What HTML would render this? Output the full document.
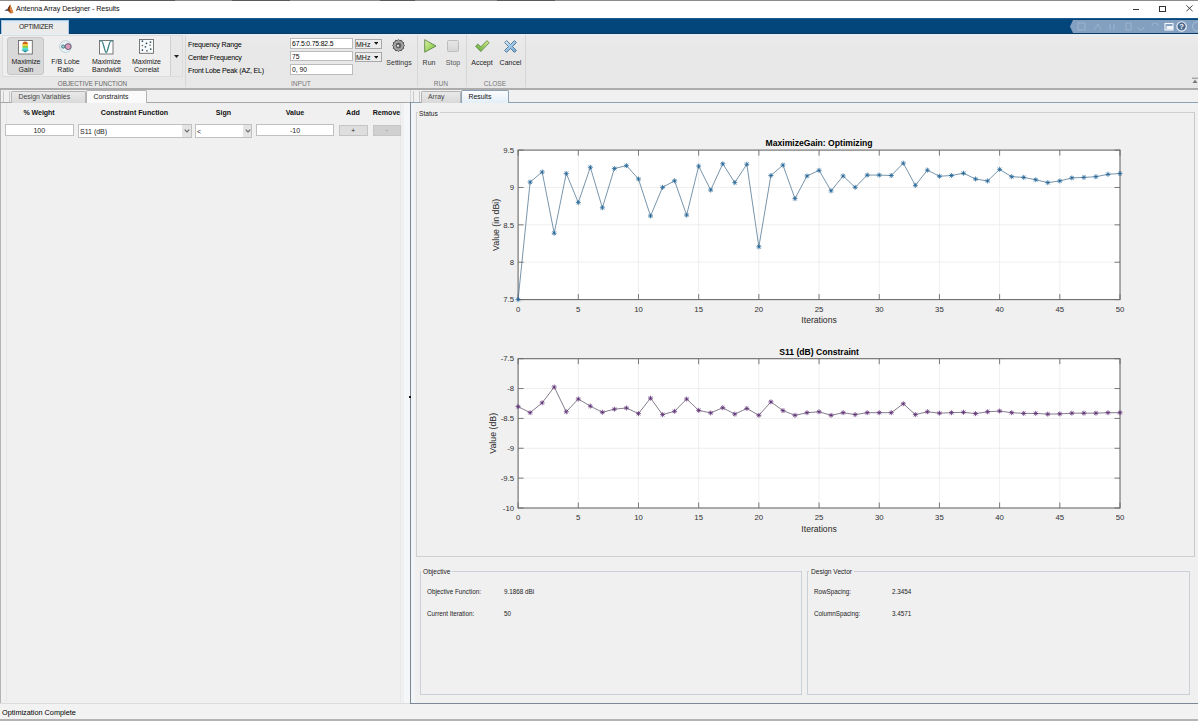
<!DOCTYPE html>
<html><head><meta charset="utf-8">
<style>
*{margin:0;padding:0;box-sizing:border-box}
html,body{width:1198px;height:721px;overflow:hidden;background:#f0f0f0;font-family:"Liberation Sans",sans-serif;color:#000}
.a{position:absolute}
.t{position:absolute;white-space:nowrap;line-height:1}
.c{text-align:center}
</style></head><body>
<!-- title bar -->
<div class="a" style="left:0;top:0;width:1198px;height:18px;background:#fff;border-top:1px solid #8c8c8c"></div>
<div class="a" style="left:40px;top:0;width:135px;height:1px;background:#5a5a5a"></div><div class="a" style="left:232px;top:0;width:58px;height:1px;background:#5a5a5a"></div><div class="a" style="left:380px;top:0;width:35px;height:1px;background:#5a5a5a"></div><div class="a" style="left:497px;top:0;width:58px;height:1px;background:#5a5a5a"></div>
<svg class="a" style="left:4px;top:3.5px" width="11" height="11" viewBox="0 0 11 11"><path d="M0.5 6.5L3.5 5L6.2 0.5L9.3 8.5L6.8 9.5L4 7Z" fill="#8a3a14"/><path d="M0.5 6.5L3.5 5L4 7Z" fill="#4a6a9a"/><path d="M6.2 0.5L9.3 8.5L6.8 9.5L5.8 5Z" fill="#e08a40"/><path d="M3.5 5L6.2 0.5L5 4Z" fill="#5a2008"/></svg>
<div class="t" style="left:16px;top:5px;font-size:7.2px;letter-spacing:-0.1px;color:#111">Antenna Array Designer - Results</div>
<div class="a" style="left:1133px;top:8.6px;width:6px;height:1px;background:#333"></div>
<div class="a" style="left:1159px;top:6px;width:6.6px;height:6px;border:1px solid #333"></div>
<svg class="a" style="left:1186.2px;top:5.4px" width="7" height="6.6" viewBox="0 0 7 6.6"><path d="M0.4 0.4L6.6 6.2M6.6 0.4L0.4 6.2" stroke="#333" stroke-width="0.9"/></svg>

<!-- blue toolstrip tab bar -->
<div class="a" style="left:0;top:18px;width:1198px;height:16px;background:#03467c;border-top:1px solid #1d5a8c;border-bottom:1px solid #0b3a66"></div>
<div class="a" style="left:1px;top:19.5px;width:68px;height:15.5px;background:linear-gradient(#dde9f4 0,#dde9f4 2px,#ebebeb 2px);border:1px solid #a9c6e2;border-bottom:none"></div>
<div class="t" style="left:19px;top:24px;font-size:6.7px;letter-spacing:-0.25px;color:#222">OPTIMIZER</div>
<!-- quick access -->
<svg class="a" style="left:1066px;top:20px" width="132" height="13" viewBox="0 0 132 13"><path d="M7 0H132V13H7L4 6.5Z" fill="#84a0c1"/>
<g fill="none" stroke="#9fb5cf" stroke-width="1" opacity="0.9"><rect x="12" y="3" width="7" height="7"/><path d="M28 10l4-6 3 6M44 4v6M48 4v6M60 3h5v7h-5zM72 7a3 3 0 1 0 6 0M86 6a3 3 0 1 1 6 0"/></g>
<rect x="99" y="3.5" width="8" height="6.5" fill="none" stroke="#f4f6f9" stroke-width="1.1"/><rect x="100.5" y="6" width="6.5" height="3.5" fill="#f4f6f9"/>
<circle cx="115.6" cy="6.4" r="4.7" fill="#4d6b90" stroke="#f4f6f9" stroke-width="1.1"/><text x="115.6" y="9.2" font-size="7.5" font-weight="bold" fill="#fff" text-anchor="middle" font-family="Liberation Sans, sans-serif">?</text>
<circle cx="131" cy="6.5" r="4.5" fill="none" stroke="#a9bdd3" stroke-width="1"/></svg>

<!-- toolstrip -->
<div class="a" style="left:0;top:34px;width:1198px;height:54px;background:linear-gradient(#e4f0f8 0,#e4f0f8 1px,#ececec 1px,#e8e8e8 12px,#e7e7e7)"></div>
<div class="a" style="left:0;top:88px;width:1198px;height:1.6px;background:#acacac"></div>
<!-- objective function group -->
<div class="a" style="left:2px;top:35px;width:181px;height:42px;border:1px solid #dcdcdc;background:#efefef"></div>
<div class="a" style="left:170px;top:36px;width:12px;height:40px;border-left:1px solid #d0d0d0;background:#e8e8e8"></div>
<svg class="a" style="left:174px;top:55px" width="5" height="3"><path d="M0 0H5L2.5 3Z" fill="#222"/></svg>
<div class="a" style="left:7px;top:37px;width:37px;height:38px;background:#d9d9d9;border:1px solid #c6c6c6;border-radius:3px"></div>
<!-- gain icon -->
<svg class="a" style="left:18px;top:39.5px" width="15" height="15" viewBox="0 0 15 15"><rect x="0.5" y="0.5" width="13.8" height="13.5" fill="#fff" stroke="#6a6a6a" stroke-width="0.9"/><defs><clipPath id="gc"><path d="M7.2 1.6C9.2 1.6 10 3 10 4.5V9.5L11.2 10L7.2 12.6L3.2 10L4.4 9.5V4.5C4.4 3 5.2 1.6 7.2 1.6Z"/></clipPath></defs>
<g clip-path="url(#gc)"><rect x="0" y="0" width="15" height="4" fill="#c8641e"/><rect x="0" y="4" width="15" height="2" fill="#f2cc3a"/><rect x="0" y="6" width="15" height="2.2" fill="#86d25a"/><rect x="0" y="8.2" width="15" height="2.2" fill="#3ed8d0"/><rect x="0" y="10.4" width="15" height="3" fill="#178a9a"/></g></svg>
<div class="t c" style="left:5px;top:57.5px;width:42px;font-size:7px;letter-spacing:-0.1px;color:#222">Maximize</div>
<div class="t c" style="left:5px;top:66px;width:42px;font-size:7px;color:#222">Gain</div>
<!-- F/B lobe icon -->
<svg class="a" style="left:58.5px;top:39.8px" width="14" height="14" viewBox="0 0 14 14"><circle cx="6.5" cy="6.6" r="5.9" fill="#f2f7fa" stroke="#b4c4cc" stroke-width="0.8"/><circle cx="6.5" cy="6.6" r="4.6" fill="none" stroke="#d4eef4" stroke-width="1"/><circle cx="4.2" cy="6.6" r="1.6" fill="#9ed4dc" stroke="#3a6e78" stroke-width="0.9"/><circle cx="9.1" cy="6.6" r="3" fill="#d89ab8" stroke="#4e4a6a" stroke-width="0.8"/></svg>
<div class="t c" style="left:44px;top:57.5px;width:43px;font-size:7px;color:#222">F/B Lobe</div>
<div class="t c" style="left:44px;top:66px;width:43px;font-size:7px;color:#222">Ratio</div>
<!-- bandwidth icon -->
<svg class="a" style="left:99px;top:39.5px" width="15" height="15" viewBox="0 0 15 15"><rect x="0.5" y="0.5" width="13.5" height="13.5" fill="#fff" stroke="#6a6a6a" stroke-width="0.9"/><path d="M0.5 0.8H2.5C4.5 0.8 5.5 12.5 7.2 12.5S10 0.8 12 0.8H14.2" fill="none" stroke="#3d8488" stroke-width="1.3"/></svg>
<div class="t c" style="left:85px;top:57.5px;width:43px;font-size:7px;letter-spacing:-0.1px;color:#222">Maximize</div>
<div class="t c" style="left:85px;top:66px;width:43px;font-size:7px;color:#222">Bandwidt</div>
<!-- correlation icon -->
<svg class="a" style="left:139px;top:39.2px" width="15" height="15" viewBox="0 0 15 15"><rect x="0.5" y="0.5" width="14" height="13.8" fill="#f6fbfd" stroke="#6a6a6a" stroke-width="0.9"/><circle cx="3.4" cy="2.2" r="0.85" fill="#3a4a5a"/><circle cx="7.5" cy="4.3" r="0.85" fill="#2a3a44"/><circle cx="11.5" cy="3.1" r="0.85" fill="#3a4a5a"/><circle cx="3.4" cy="6.5" r="0.85" fill="#7a7060"/><circle cx="6.4" cy="7.8" r="0.85" fill="#3a5a70"/><circle cx="11.0" cy="6.2" r="0.85" fill="#8a8a80"/><circle cx="3.4" cy="11.1" r="0.85" fill="#2a3a50"/><circle cx="8.0" cy="11.8" r="0.85" fill="#5a6050"/><circle cx="11.7" cy="10.1" r="0.85" fill="#2a4a3a"/></svg>
<div class="t c" style="left:125px;top:57.5px;width:43px;font-size:7px;letter-spacing:-0.1px;color:#222">Maximize</div>
<div class="t c" style="left:125px;top:66px;width:43px;font-size:7px;color:#222">Correlat</div>
<div class="t c" style="left:2px;top:81px;width:181px;font-size:6.3px;color:#666">OBJECTIVE FUNCTION</div>
<div class="a" style="left:185px;top:35px;width:1px;height:52px;background:#d6d6d6"></div>

<!-- input group -->
<div class="t" style="left:188px;top:42px;font-size:7.1px;letter-spacing:-0.2px;color:#000">Frequency Range</div>
<div class="t" style="left:188px;top:55px;font-size:7.1px;letter-spacing:-0.2px;color:#000">Center Frequency</div>
<div class="t" style="left:188px;top:68px;font-size:7.1px;letter-spacing:-0.2px;color:#000">Front Lobe Peak (AZ, EL)</div>
<div class="a" style="left:290px;top:38.3px;width:62.5px;height:10.4px;background:#fff;border:1px solid #bcbcbc"></div>
<div class="t" style="left:292px;top:40.5px;font-size:6.8px;letter-spacing:-0.15px;color:#000">67.5:0.75:82.5</div>
<div class="a" style="left:290px;top:51px;width:62.5px;height:10.4px;background:#fff;border:1px solid #bcbcbc"></div>
<div class="t" style="left:292px;top:53.5px;font-size:6.8px;color:#111">75</div>
<div class="a" style="left:290px;top:64.3px;width:62.5px;height:10.4px;background:#fff;border:1px solid #bcbcbc"></div>
<div class="t" style="left:292px;top:66.5px;font-size:6.8px;color:#111">0, 90</div>
<div class="a" style="left:354.5px;top:38.5px;width:27.5px;height:10px;background:#ececec;border:1px solid #a8a8a8"></div>
<div class="t" style="left:356px;top:40.5px;font-size:7px;color:#111">MHz</div>
<svg class="a" style="left:373.5px;top:42.2px" width="4.5" height="3"><path d="M0 0H4.5L2.25 2.8Z" fill="#111"/></svg>
<div class="a" style="left:354.5px;top:52px;width:27.5px;height:10px;background:#ececec;border:1px solid #a8a8a8"></div>
<div class="t" style="left:356px;top:54px;font-size:7px;color:#111">MHz</div>
<svg class="a" style="left:373.5px;top:55.6px" width="4.5" height="3"><path d="M0 0H4.5L2.25 2.8Z" fill="#111"/></svg>
<svg class="a" style="left:392.2px;top:39.4px" width="13" height="13" viewBox="0 0 13 13"><path d="M12.50 6.50L11.33 7.79L11.70 9.50L10.04 10.04L9.50 11.70L7.79 11.33L6.50 12.50L5.21 11.33L3.50 11.70L2.96 10.04L1.30 9.50L1.67 7.79L0.50 6.50L1.67 5.21L1.30 3.50L2.96 2.96L3.50 1.30L5.21 1.67L6.50 0.50L7.79 1.67L9.50 1.30L10.04 2.96L11.70 3.50L11.33 5.21Z" fill="#a0a0a0" stroke="#4a4a4a" stroke-width="0.9" stroke-linejoin="round"/><circle cx="6.5" cy="6.5" r="3.4" fill="#5e5e5e"/><circle cx="6.5" cy="6.5" r="3.4" fill="none" stroke="#c8c8c8" stroke-width="0.6"/><circle cx="6" cy="6.8" r="1.1" fill="#e8e8e8"/></svg>
<div class="t c" style="left:384px;top:58.5px;width:30px;font-size:7px;color:#333">Settings</div>
<div class="t" style="left:291px;top:81px;font-size:6.6px;color:#777">INPUT</div>
<div class="a" style="left:417px;top:35px;width:1px;height:52px;background:#d6d6d6"></div>

<!-- run group -->
<svg class="a" style="left:423.5px;top:39.3px" width="13" height="14" viewBox="0 0 13 14"><defs><linearGradient id="gr" x1="0" y1="0" x2="1" y2="1"><stop offset="0" stop-color="#e2f5b0"/><stop offset="0.5" stop-color="#a8d86a"/><stop offset="1" stop-color="#7cba48"/></linearGradient></defs><path d="M0.7 0.7L12 7L0.7 13.2Z" fill="url(#gr)" stroke="#4d7a38" stroke-width="0.8" stroke-linejoin="round"/></svg>
<div class="t c" style="left:417px;top:58.5px;width:24px;font-size:7px;color:#333">Run</div>
<div class="a" style="left:447px;top:40px;width:11.5px;height:11.7px;background:linear-gradient(#e6e6e6,#d6d6d6);border:1px solid #bdbdbd;border-radius:1.5px"></div>
<div class="t c" style="left:441px;top:58.5px;width:24px;font-size:7px;color:#555">Stop</div>
<div class="t c" style="left:417px;top:81px;width:48px;font-size:6.6px;color:#777">RUN</div>
<div class="a" style="left:465.5px;top:35px;width:1px;height:52px;background:#d6d6d6"></div>

<!-- close group -->
<svg class="a" style="left:474.5px;top:40px" width="15" height="12.5" viewBox="0 0 15 12.5"><defs><linearGradient id="gk" x1="1" y1="0" x2="0" y2="1"><stop offset="0" stop-color="#d8ec90"/><stop offset="0.6" stop-color="#8cc45a"/><stop offset="1" stop-color="#5f9c3a"/></linearGradient></defs><path d="M0.6 6.2L2.8 4L5.8 6.8L12 0.6L14.2 2.8L5.8 11.6Z" fill="url(#gk)" stroke="#4f7a30" stroke-width="0.7" stroke-linejoin="round"/></svg>
<div class="t c" style="left:467px;top:58.5px;width:30px;font-size:7px;color:#222">Accept</div>
<svg class="a" style="left:503.8px;top:40px" width="13" height="13" viewBox="0 0 13 13"><defs><linearGradient id="gx" x1="0" y1="0" x2="1" y2="1"><stop offset="0" stop-color="#e4f0fa"/><stop offset="0.5" stop-color="#9cc6e8"/><stop offset="1" stop-color="#6fa4d2"/></linearGradient></defs><path d="M0.6 2.6L2.6 0.6L6.5 4.5L10.4 0.6L12.4 2.6L8.5 6.5L12.4 10.4L10.4 12.4L6.5 8.5L2.6 12.4L0.6 10.4L4.5 6.5Z" fill="url(#gx)" stroke="#3f6688" stroke-width="0.8" stroke-linejoin="round"/></svg>
<div class="t c" style="left:496px;top:58.5px;width:29px;font-size:7px;color:#222">Cancel</div>
<div class="t c" style="left:466px;top:81px;width:58px;font-size:6.6px;color:#777">CLOSE</div>
<div class="a" style="left:524.5px;top:35px;width:1px;height:52px;background:#d6d6d6"></div>
<svg class="a" style="left:1192px;top:77px" width="6" height="7"><path d="M0 1.2H6" stroke="#888" stroke-width="1"/><path d="M0.5 6L3 2.8L5.5 6Z" fill="#777"/></svg>

<!-- left panel -->
<div class="a" style="left:0;top:89.5px;width:410px;height:613.5px;border-left:1px solid #b4b4b4;background:#f0f0f0"></div>
<div class="a" style="left:0;top:102px;width:410px;height:1px;background:#a8a8a8"></div>
<div class="a" style="left:3px;top:91px;width:7px;height:11px;border-left:1px solid #c8c8c8;border-right:1px solid #c8c8c8"></div>
<div class="a" style="left:10.5px;top:90.5px;width:75px;height:12px;background:linear-gradient(#e9e9e9,#d9d9d9);border:1px solid #b4b4b4;border-bottom:none;border-radius:2px 2px 0 0"></div>
<div class="t" style="left:18.5px;top:94px;font-size:6.9px;color:#444">Design Variables</div>
<div class="a" style="left:86px;top:90px;width:61px;height:13px;background:#fafafa;border:1px solid #b4b4b4;border-bottom:none;border-radius:2px 2px 0 0"></div>
<div class="t" style="left:93.5px;top:94px;font-size:6.9px;color:#222">Constraints</div>
<div class="a" style="left:5.5px;top:103px;width:1px;height:599px;background:#e6e6e6"></div>
<div class="a" style="left:400px;top:103px;width:1px;height:599px;background:#e8e8e8"></div>

<div class="t c" style="left:5px;top:110px;width:68px;font-size:7.1px;font-weight:bold;letter-spacing:-0.1px;color:#111">% Weight</div>
<div class="t c" style="left:78px;top:110px;width:113px;font-size:7.1px;font-weight:bold;color:#111">Constraint Function</div>
<div class="t c" style="left:195px;top:110px;width:57px;font-size:7.1px;font-weight:bold;color:#111">Sign</div>
<div class="t c" style="left:256px;top:110px;width:78px;font-size:7.1px;font-weight:bold;color:#111">Value</div>
<div class="t c" style="left:339px;top:110px;width:28px;font-size:7.1px;font-weight:bold;color:#111">Add</div>
<div class="t c" style="left:372px;top:110px;width:29px;font-size:7.1px;font-weight:bold;color:#111">Remove</div>

<div class="a" style="left:5px;top:124.2px;width:68.5px;height:11.8px;background:#fff;border:1px solid #c0c0c0"></div>
<div class="t c" style="left:5px;top:127px;width:68.5px;font-size:7px;color:#222">100</div>
<div class="a" style="left:78px;top:124px;width:113.5px;height:13.8px;background:#fff;border:1px solid #c0c0c0"></div>
<div class="a" style="left:182px;top:125px;width:9px;height:11.8px;background:#e4e4e4"></div>
<svg class="a" style="left:184px;top:129.3px" width="6" height="4"><path d="M0.7 0.7L3 3L5.3 0.7" fill="none" stroke="#666" stroke-width="1.1"/></svg>
<div class="t" style="left:80px;top:128px;font-size:7px;color:#222">S11 (dB)</div>
<div class="a" style="left:195px;top:124px;width:57px;height:13.8px;background:#fff;border:1px solid #c0c0c0"></div>
<div class="a" style="left:243px;top:125px;width:8px;height:11.8px;background:#e4e4e4"></div>
<svg class="a" style="left:245px;top:129.3px" width="6" height="4"><path d="M0.7 0.7L3 3L5.3 0.7" fill="none" stroke="#666" stroke-width="1.1"/></svg>
<div class="t" style="left:197px;top:128px;font-size:7px;color:#222">&lt;</div>
<div class="a" style="left:256px;top:124.2px;width:78px;height:11.8px;background:#fff;border:1px solid #c0c0c0"></div>
<div class="t c" style="left:256px;top:127px;width:78px;font-size:7px;color:#222">-10</div>
<div class="a" style="left:339px;top:125px;width:28.5px;height:10.5px;background:#dedede;border:1px solid #c4c4c4"></div>
<div class="t c" style="left:339px;top:127.5px;width:28.5px;font-size:6.5px;color:#222">+</div>
<div class="a" style="left:372.5px;top:125px;width:28.5px;height:10.5px;background:#d0d0d0;border:1px solid #c6c6c6"></div>
<div class="t c" style="left:372.5px;top:126px;width:28.5px;font-size:7px;color:#888">-</div>

<!-- right panel -->
<div class="a" style="left:404px;top:103px;width:6px;height:600px;background:#f4f6f8"></div>
<div class="a" style="left:410px;top:89.5px;width:788px;height:13px;background:#f0f0f0;border-left:1px solid #d4d8dc"></div>
<div class="a" style="left:410px;top:102px;width:788px;height:601.5px;background:#f0f0f0;border-left:1px solid #7d8896;border-bottom:1px solid #7d8896"></div>
<div class="a" style="left:411px;top:102px;width:787px;height:1px;background:#8da0b4"></div>
<div class="a" style="left:411px;top:103px;width:787px;height:4px;background:#f0f2f2"></div>
<div class="a" style="left:411px;top:103px;width:4px;height:600px;background:#f1f5f8"></div>
<div class="a" style="left:413px;top:91px;width:7px;height:11px;border-left:1px solid #c8c8c8;border-right:1px solid #c8c8c8"></div>
<div class="a" style="left:421px;top:90.5px;width:40px;height:12px;background:linear-gradient(#e9e9e9,#d9d9d9);border:1px solid #b4b4b4;border-bottom:none;border-radius:2px 2px 0 0"></div>
<div class="t" style="left:428px;top:94px;font-size:6.9px;color:#444">Array</div>
<div class="a" style="left:461px;top:89.5px;width:48px;height:13.5px;background:linear-gradient(#fbfdff,#e3eef8);border:1px solid #8da0b4;border-bottom:none;border-radius:2px 2px 0 0"></div>
<div class="t" style="left:468.5px;top:94px;font-size:6.9px;color:#111">Results</div>
<div class="a" style="left:409px;top:396px;width:2px;height:2px;background:#111"></div>

<!-- status panel -->
<div class="a" style="left:415.5px;top:112px;width:779px;height:444.5px;border:1px solid #d0d0d0;border-right-color:#c8c8c8"></div>
<div class="a" style="left:418px;top:109px;width:22px;height:7px;background:#f0f0f0"></div>
<div class="t" style="left:419px;top:110.5px;font-size:6.6px;color:#222">Status</div>

<svg class="a" style="left:0;top:0" width="1198" height="721" viewBox="0 0 1198 721">
<rect x="518.10" y="150.10" width="601.90" height="149.50" fill="#fff"/>
<path d="M578.29 150.10V299.60M638.48 150.10V299.60M698.67 150.10V299.60M758.86 150.10V299.60M819.05 150.10V299.60M879.24 150.10V299.60M939.43 150.10V299.60M999.62 150.10V299.60M1059.81 150.10V299.60M518.10 262.23H1120.00M518.10 224.85H1120.00M518.10 187.47H1120.00" stroke="#ebebeb" stroke-width="0.8" fill="none"/>
<path d="M518.10 299.60V294.10M518.10 150.10V155.60M578.29 299.60V294.10M578.29 150.10V155.60M638.48 299.60V294.10M638.48 150.10V155.60M698.67 299.60V294.10M698.67 150.10V155.60M758.86 299.60V294.10M758.86 150.10V155.60M819.05 299.60V294.10M819.05 150.10V155.60M879.24 299.60V294.10M879.24 150.10V155.60M939.43 299.60V294.10M939.43 150.10V155.60M999.62 299.60V294.10M999.62 150.10V155.60M1059.81 299.60V294.10M1059.81 150.10V155.60M1120.00 299.60V294.10M1120.00 150.10V155.60M518.10 299.60H523.60M1120.00 299.60H1114.50M518.10 262.23H523.60M1120.00 262.23H1114.50M518.10 224.85H523.60M1120.00 224.85H1114.50M518.10 187.47H523.60M1120.00 187.47H1114.50M518.10 150.10H523.60M1120.00 150.10H1114.50" stroke="#5a5a5a" stroke-width="0.8" fill="none"/>
<rect x="518.10" y="150.10" width="601.90" height="149.50" fill="none" stroke="#6a6a6a" stroke-width="1.1"/>
<polyline points="518.10,299.60 530.14,182.09 542.18,172.00 554.21,233.22 566.25,173.42 578.29,202.57 590.33,167.29 602.37,207.81 614.40,168.49 626.44,165.65 638.48,179.03 650.52,216.03 662.56,187.33 674.59,180.75 686.63,215.13 698.67,166.10 710.71,190.09 722.75,163.78 734.78,182.62 746.82,164.23 758.86,246.83 770.90,175.51 782.94,165.05 794.97,198.61 807.01,175.96 819.05,170.36 831.09,190.84 843.13,175.96 855.16,187.33 867.20,175.07 879.24,175.07 891.28,175.51 903.32,163.18 915.35,185.38 927.39,170.13 939.43,176.26 951.47,175.51 963.51,173.20 975.54,179.03 987.58,180.97 999.62,169.39 1011.66,176.71 1023.70,177.38 1035.73,179.78 1047.77,182.62 1059.81,180.97 1071.85,177.91 1083.89,177.38 1095.92,176.71 1107.96,174.32 1120.00,173.51" fill="none" stroke="#4a7190" stroke-width="0.75"/>
<path d="M515.60 299.60h5.00M518.10 297.10v5.00M516.30 297.80l3.60 3.60M516.30 301.40l3.60 -3.60M527.64 182.09h5.00M530.14 179.59v5.00M528.34 180.29l3.60 3.60M528.34 183.89l3.60 -3.60M539.68 172.00h5.00M542.18 169.50v5.00M540.38 170.20l3.60 3.60M540.38 173.80l3.60 -3.60M551.71 233.22h5.00M554.21 230.72v5.00M552.41 231.42l3.60 3.60M552.41 235.02l3.60 -3.60M563.75 173.42h5.00M566.25 170.92v5.00M564.45 171.62l3.60 3.60M564.45 175.22l3.60 -3.60M575.79 202.57h5.00M578.29 200.07v5.00M576.49 200.77l3.60 3.60M576.49 204.37l3.60 -3.60M587.83 167.29h5.00M590.33 164.79v5.00M588.53 165.49l3.60 3.60M588.53 169.09l3.60 -3.60M599.87 207.81h5.00M602.37 205.31v5.00M600.57 206.01l3.60 3.60M600.57 209.61l3.60 -3.60M611.90 168.49h5.00M614.40 165.99v5.00M612.60 166.69l3.60 3.60M612.60 170.29l3.60 -3.60M623.94 165.65h5.00M626.44 163.15v5.00M624.64 163.85l3.60 3.60M624.64 167.45l3.60 -3.60M635.98 179.03h5.00M638.48 176.53v5.00M636.68 177.23l3.60 3.60M636.68 180.83l3.60 -3.60M648.02 216.03h5.00M650.52 213.53v5.00M648.72 214.23l3.60 3.60M648.72 217.83l3.60 -3.60M660.06 187.33h5.00M662.56 184.83v5.00M660.76 185.53l3.60 3.60M660.76 189.13l3.60 -3.60M672.09 180.75h5.00M674.59 178.25v5.00M672.79 178.95l3.60 3.60M672.79 182.55l3.60 -3.60M684.13 215.13h5.00M686.63 212.63v5.00M684.83 213.33l3.60 3.60M684.83 216.93l3.60 -3.60M696.17 166.10h5.00M698.67 163.60v5.00M696.87 164.30l3.60 3.60M696.87 167.90l3.60 -3.60M708.21 190.09h5.00M710.71 187.59v5.00M708.91 188.29l3.60 3.60M708.91 191.89l3.60 -3.60M720.25 163.78h5.00M722.75 161.28v5.00M720.95 161.98l3.60 3.60M720.95 165.58l3.60 -3.60M732.28 182.62h5.00M734.78 180.12v5.00M732.98 180.82l3.60 3.60M732.98 184.42l3.60 -3.60M744.32 164.23h5.00M746.82 161.73v5.00M745.02 162.43l3.60 3.60M745.02 166.03l3.60 -3.60M756.36 246.83h5.00M758.86 244.33v5.00M757.06 245.03l3.60 3.60M757.06 248.63l3.60 -3.60M768.40 175.51h5.00M770.90 173.01v5.00M769.10 173.71l3.60 3.60M769.10 177.31l3.60 -3.60M780.44 165.05h5.00M782.94 162.55v5.00M781.14 163.25l3.60 3.60M781.14 166.85l3.60 -3.60M792.47 198.61h5.00M794.97 196.11v5.00M793.17 196.81l3.60 3.60M793.17 200.41l3.60 -3.60M804.51 175.96h5.00M807.01 173.46v5.00M805.21 174.16l3.60 3.60M805.21 177.76l3.60 -3.60M816.55 170.36h5.00M819.05 167.86v5.00M817.25 168.56l3.60 3.60M817.25 172.16l3.60 -3.60M828.59 190.84h5.00M831.09 188.34v5.00M829.29 189.04l3.60 3.60M829.29 192.64l3.60 -3.60M840.63 175.96h5.00M843.13 173.46v5.00M841.33 174.16l3.60 3.60M841.33 177.76l3.60 -3.60M852.66 187.33h5.00M855.16 184.83v5.00M853.36 185.53l3.60 3.60M853.36 189.13l3.60 -3.60M864.70 175.07h5.00M867.20 172.57v5.00M865.40 173.27l3.60 3.60M865.40 176.87l3.60 -3.60M876.74 175.07h5.00M879.24 172.57v5.00M877.44 173.27l3.60 3.60M877.44 176.87l3.60 -3.60M888.78 175.51h5.00M891.28 173.01v5.00M889.48 173.71l3.60 3.60M889.48 177.31l3.60 -3.60M900.82 163.18h5.00M903.32 160.68v5.00M901.52 161.38l3.60 3.60M901.52 164.98l3.60 -3.60M912.85 185.38h5.00M915.35 182.88v5.00M913.55 183.58l3.60 3.60M913.55 187.18l3.60 -3.60M924.89 170.13h5.00M927.39 167.63v5.00M925.59 168.33l3.60 3.60M925.59 171.93l3.60 -3.60M936.93 176.26h5.00M939.43 173.76v5.00M937.63 174.46l3.60 3.60M937.63 178.06l3.60 -3.60M948.97 175.51h5.00M951.47 173.01v5.00M949.67 173.71l3.60 3.60M949.67 177.31l3.60 -3.60M961.01 173.20h5.00M963.51 170.70v5.00M961.71 171.40l3.60 3.60M961.71 175.00l3.60 -3.60M973.04 179.03h5.00M975.54 176.53v5.00M973.74 177.23l3.60 3.60M973.74 180.83l3.60 -3.60M985.08 180.97h5.00M987.58 178.47v5.00M985.78 179.17l3.60 3.60M985.78 182.77l3.60 -3.60M997.12 169.39h5.00M999.62 166.89v5.00M997.82 167.59l3.60 3.60M997.82 171.19l3.60 -3.60M1009.16 176.71h5.00M1011.66 174.21v5.00M1009.86 174.91l3.60 3.60M1009.86 178.51l3.60 -3.60M1021.20 177.38h5.00M1023.70 174.88v5.00M1021.90 175.58l3.60 3.60M1021.90 179.18l3.60 -3.60M1033.23 179.78h5.00M1035.73 177.28v5.00M1033.93 177.98l3.60 3.60M1033.93 181.58l3.60 -3.60M1045.27 182.62h5.00M1047.77 180.12v5.00M1045.97 180.82l3.60 3.60M1045.97 184.42l3.60 -3.60M1057.31 180.97h5.00M1059.81 178.47v5.00M1058.01 179.17l3.60 3.60M1058.01 182.77l3.60 -3.60M1069.35 177.91h5.00M1071.85 175.41v5.00M1070.05 176.11l3.60 3.60M1070.05 179.71l3.60 -3.60M1081.39 177.38h5.00M1083.89 174.88v5.00M1082.09 175.58l3.60 3.60M1082.09 179.18l3.60 -3.60M1093.42 176.71h5.00M1095.92 174.21v5.00M1094.12 174.91l3.60 3.60M1094.12 178.51l3.60 -3.60M1105.46 174.32h5.00M1107.96 171.82v5.00M1106.16 172.52l3.60 3.60M1106.16 176.12l3.60 -3.60M1117.50 173.51h5.00M1120.00 171.01v5.00M1118.20 171.71l3.60 3.60M1118.20 175.31l3.60 -3.60" stroke="#1f6294" stroke-width="0.75" fill="none"/>
<g font-family='"Liberation Sans", sans-serif' font-size="7.8" fill="#303030"><text x="518.10" y="311.60" text-anchor="middle">0</text><text x="578.29" y="311.60" text-anchor="middle">5</text><text x="638.48" y="311.60" text-anchor="middle">10</text><text x="698.67" y="311.60" text-anchor="middle">15</text><text x="758.86" y="311.60" text-anchor="middle">20</text><text x="819.05" y="311.60" text-anchor="middle">25</text><text x="879.24" y="311.60" text-anchor="middle">30</text><text x="939.43" y="311.60" text-anchor="middle">35</text><text x="999.62" y="311.60" text-anchor="middle">40</text><text x="1059.81" y="311.60" text-anchor="middle">45</text><text x="1120.00" y="311.60" text-anchor="middle">50</text><text x="514.10" y="302.30" text-anchor="end">7.5</text><text x="514.10" y="264.93" text-anchor="end">8</text><text x="514.10" y="227.55" text-anchor="end">8.5</text><text x="514.10" y="190.17" text-anchor="end">9</text><text x="514.10" y="152.80" text-anchor="end">9.5</text></g>
<text x="819.05" y="323.20" text-anchor="middle" font-family='"Liberation Sans", sans-serif' font-size="8.6" fill="#262626">Iterations</text>
<text x="819.05" y="146.20" text-anchor="middle" font-family='"Liberation Sans", sans-serif' font-size="8.6" font-weight="bold" fill="#000">MaximizeGain: Optimizing</text>
<text transform="translate(499.30 224.85) rotate(-90)" text-anchor="middle" font-family='"Liberation Sans", sans-serif' font-size="8.8" fill="#262626">Value (in dBi)</text>
<rect x="518.10" y="358.70" width="601.90" height="149.30" fill="#fff"/>
<path d="M578.29 358.70V508.00M638.48 358.70V508.00M698.67 358.70V508.00M758.86 358.70V508.00M819.05 358.70V508.00M879.24 358.70V508.00M939.43 358.70V508.00M999.62 358.70V508.00M1059.81 358.70V508.00M518.10 478.14H1120.00M518.10 448.28H1120.00M518.10 418.42H1120.00M518.10 388.56H1120.00" stroke="#ebebeb" stroke-width="0.8" fill="none"/>
<path d="M518.10 508.00V502.50M518.10 358.70V364.20M578.29 508.00V502.50M578.29 358.70V364.20M638.48 508.00V502.50M638.48 358.70V364.20M698.67 508.00V502.50M698.67 358.70V364.20M758.86 508.00V502.50M758.86 358.70V364.20M819.05 508.00V502.50M819.05 358.70V364.20M879.24 508.00V502.50M879.24 358.70V364.20M939.43 508.00V502.50M939.43 358.70V364.20M999.62 508.00V502.50M999.62 358.70V364.20M1059.81 508.00V502.50M1059.81 358.70V364.20M1120.00 508.00V502.50M1120.00 358.70V364.20M518.10 508.00H523.60M1120.00 508.00H1114.50M518.10 478.14H523.60M1120.00 478.14H1114.50M518.10 448.28H523.60M1120.00 448.28H1114.50M518.10 418.42H523.60M1120.00 418.42H1114.50M518.10 388.56H523.60M1120.00 388.56H1114.50M518.10 358.70H523.60M1120.00 358.70H1114.50" stroke="#5a5a5a" stroke-width="0.8" fill="none"/>
<rect x="518.10" y="358.70" width="601.90" height="149.30" fill="none" stroke="#6a6a6a" stroke-width="1.1"/>
<polyline points="518.10,406.60 530.14,412.69 542.18,402.83 554.21,387.01 566.25,411.79 578.29,399.01 590.33,406.12 602.37,412.27 614.40,409.16 626.44,407.97 638.48,413.64 650.52,398.12 662.56,414.60 674.59,411.31 686.63,399.01 698.67,410.36 710.71,412.93 722.75,407.73 734.78,414.12 746.82,408.45 758.86,415.31 770.90,401.88 782.94,410.60 794.97,415.31 807.01,412.69 819.05,411.79 831.09,415.31 843.13,412.69 855.16,414.60 867.20,412.69 879.24,412.69 891.28,412.69 903.32,403.73 915.35,414.60 927.39,411.79 939.43,413.16 951.47,412.69 963.51,412.27 975.54,413.64 987.58,411.79 999.62,411.07 1011.66,412.69 1023.70,413.40 1035.73,413.40 1047.77,414.12 1059.81,413.88 1071.85,413.16 1083.89,413.16 1095.92,413.16 1107.96,412.69 1120.00,412.69" fill="none" stroke="#5e5068" stroke-width="0.75"/>
<path d="M515.60 406.60h5.00M518.10 404.10v5.00M516.30 404.80l3.60 3.60M516.30 408.40l3.60 -3.60M527.64 412.69h5.00M530.14 410.19v5.00M528.34 410.89l3.60 3.60M528.34 414.49l3.60 -3.60M539.68 402.83h5.00M542.18 400.33v5.00M540.38 401.03l3.60 3.60M540.38 404.63l3.60 -3.60M551.71 387.01h5.00M554.21 384.51v5.00M552.41 385.21l3.60 3.60M552.41 388.81l3.60 -3.60M563.75 411.79h5.00M566.25 409.29v5.00M564.45 409.99l3.60 3.60M564.45 413.59l3.60 -3.60M575.79 399.01h5.00M578.29 396.51v5.00M576.49 397.21l3.60 3.60M576.49 400.81l3.60 -3.60M587.83 406.12h5.00M590.33 403.62v5.00M588.53 404.32l3.60 3.60M588.53 407.92l3.60 -3.60M599.87 412.27h5.00M602.37 409.77v5.00M600.57 410.47l3.60 3.60M600.57 414.07l3.60 -3.60M611.90 409.16h5.00M614.40 406.66v5.00M612.60 407.36l3.60 3.60M612.60 410.96l3.60 -3.60M623.94 407.97h5.00M626.44 405.47v5.00M624.64 406.17l3.60 3.60M624.64 409.77l3.60 -3.60M635.98 413.64h5.00M638.48 411.14v5.00M636.68 411.84l3.60 3.60M636.68 415.44l3.60 -3.60M648.02 398.12h5.00M650.52 395.62v5.00M648.72 396.32l3.60 3.60M648.72 399.92l3.60 -3.60M660.06 414.60h5.00M662.56 412.10v5.00M660.76 412.80l3.60 3.60M660.76 416.40l3.60 -3.60M672.09 411.31h5.00M674.59 408.81v5.00M672.79 409.51l3.60 3.60M672.79 413.11l3.60 -3.60M684.13 399.01h5.00M686.63 396.51v5.00M684.83 397.21l3.60 3.60M684.83 400.81l3.60 -3.60M696.17 410.36h5.00M698.67 407.86v5.00M696.87 408.56l3.60 3.60M696.87 412.16l3.60 -3.60M708.21 412.93h5.00M710.71 410.43v5.00M708.91 411.13l3.60 3.60M708.91 414.73l3.60 -3.60M720.25 407.73h5.00M722.75 405.23v5.00M720.95 405.93l3.60 3.60M720.95 409.53l3.60 -3.60M732.28 414.12h5.00M734.78 411.62v5.00M732.98 412.32l3.60 3.60M732.98 415.92l3.60 -3.60M744.32 408.45h5.00M746.82 405.95v5.00M745.02 406.65l3.60 3.60M745.02 410.25l3.60 -3.60M756.36 415.31h5.00M758.86 412.81v5.00M757.06 413.51l3.60 3.60M757.06 417.11l3.60 -3.60M768.40 401.88h5.00M770.90 399.38v5.00M769.10 400.08l3.60 3.60M769.10 403.68l3.60 -3.60M780.44 410.60h5.00M782.94 408.10v5.00M781.14 408.80l3.60 3.60M781.14 412.40l3.60 -3.60M792.47 415.31h5.00M794.97 412.81v5.00M793.17 413.51l3.60 3.60M793.17 417.11l3.60 -3.60M804.51 412.69h5.00M807.01 410.19v5.00M805.21 410.89l3.60 3.60M805.21 414.49l3.60 -3.60M816.55 411.79h5.00M819.05 409.29v5.00M817.25 409.99l3.60 3.60M817.25 413.59l3.60 -3.60M828.59 415.31h5.00M831.09 412.81v5.00M829.29 413.51l3.60 3.60M829.29 417.11l3.60 -3.60M840.63 412.69h5.00M843.13 410.19v5.00M841.33 410.89l3.60 3.60M841.33 414.49l3.60 -3.60M852.66 414.60h5.00M855.16 412.10v5.00M853.36 412.80l3.60 3.60M853.36 416.40l3.60 -3.60M864.70 412.69h5.00M867.20 410.19v5.00M865.40 410.89l3.60 3.60M865.40 414.49l3.60 -3.60M876.74 412.69h5.00M879.24 410.19v5.00M877.44 410.89l3.60 3.60M877.44 414.49l3.60 -3.60M888.78 412.69h5.00M891.28 410.19v5.00M889.48 410.89l3.60 3.60M889.48 414.49l3.60 -3.60M900.82 403.73h5.00M903.32 401.23v5.00M901.52 401.93l3.60 3.60M901.52 405.53l3.60 -3.60M912.85 414.60h5.00M915.35 412.10v5.00M913.55 412.80l3.60 3.60M913.55 416.40l3.60 -3.60M924.89 411.79h5.00M927.39 409.29v5.00M925.59 409.99l3.60 3.60M925.59 413.59l3.60 -3.60M936.93 413.16h5.00M939.43 410.66v5.00M937.63 411.36l3.60 3.60M937.63 414.96l3.60 -3.60M948.97 412.69h5.00M951.47 410.19v5.00M949.67 410.89l3.60 3.60M949.67 414.49l3.60 -3.60M961.01 412.27h5.00M963.51 409.77v5.00M961.71 410.47l3.60 3.60M961.71 414.07l3.60 -3.60M973.04 413.64h5.00M975.54 411.14v5.00M973.74 411.84l3.60 3.60M973.74 415.44l3.60 -3.60M985.08 411.79h5.00M987.58 409.29v5.00M985.78 409.99l3.60 3.60M985.78 413.59l3.60 -3.60M997.12 411.07h5.00M999.62 408.57v5.00M997.82 409.27l3.60 3.60M997.82 412.87l3.60 -3.60M1009.16 412.69h5.00M1011.66 410.19v5.00M1009.86 410.89l3.60 3.60M1009.86 414.49l3.60 -3.60M1021.20 413.40h5.00M1023.70 410.90v5.00M1021.90 411.60l3.60 3.60M1021.90 415.20l3.60 -3.60M1033.23 413.40h5.00M1035.73 410.90v5.00M1033.93 411.60l3.60 3.60M1033.93 415.20l3.60 -3.60M1045.27 414.12h5.00M1047.77 411.62v5.00M1045.97 412.32l3.60 3.60M1045.97 415.92l3.60 -3.60M1057.31 413.88h5.00M1059.81 411.38v5.00M1058.01 412.08l3.60 3.60M1058.01 415.68l3.60 -3.60M1069.35 413.16h5.00M1071.85 410.66v5.00M1070.05 411.36l3.60 3.60M1070.05 414.96l3.60 -3.60M1081.39 413.16h5.00M1083.89 410.66v5.00M1082.09 411.36l3.60 3.60M1082.09 414.96l3.60 -3.60M1093.42 413.16h5.00M1095.92 410.66v5.00M1094.12 411.36l3.60 3.60M1094.12 414.96l3.60 -3.60M1105.46 412.69h5.00M1107.96 410.19v5.00M1106.16 410.89l3.60 3.60M1106.16 414.49l3.60 -3.60M1117.50 412.69h5.00M1120.00 410.19v5.00M1118.20 410.89l3.60 3.60M1118.20 414.49l3.60 -3.60" stroke="#5a2a72" stroke-width="0.75" fill="none"/>
<g font-family='"Liberation Sans", sans-serif' font-size="7.8" fill="#303030"><text x="518.10" y="520.00" text-anchor="middle">0</text><text x="578.29" y="520.00" text-anchor="middle">5</text><text x="638.48" y="520.00" text-anchor="middle">10</text><text x="698.67" y="520.00" text-anchor="middle">15</text><text x="758.86" y="520.00" text-anchor="middle">20</text><text x="819.05" y="520.00" text-anchor="middle">25</text><text x="879.24" y="520.00" text-anchor="middle">30</text><text x="939.43" y="520.00" text-anchor="middle">35</text><text x="999.62" y="520.00" text-anchor="middle">40</text><text x="1059.81" y="520.00" text-anchor="middle">45</text><text x="1120.00" y="520.00" text-anchor="middle">50</text><text x="514.10" y="510.70" text-anchor="end">-10</text><text x="514.10" y="480.84" text-anchor="end">-9.5</text><text x="514.10" y="450.98" text-anchor="end">-9</text><text x="514.10" y="421.12" text-anchor="end">-8.5</text><text x="514.10" y="391.26" text-anchor="end">-8</text><text x="514.10" y="361.40" text-anchor="end">-7.5</text></g>
<text x="819.05" y="531.60" text-anchor="middle" font-family='"Liberation Sans", sans-serif' font-size="8.6" fill="#262626">Iterations</text>
<text x="819.05" y="354.80" text-anchor="middle" font-family='"Liberation Sans", sans-serif' font-size="8.6" font-weight="bold" fill="#000">S11 (dB) Constraint</text>
<text transform="translate(496.30 433.35) rotate(-90)" text-anchor="middle" font-family='"Liberation Sans", sans-serif' font-size="8.8" fill="#262626">Value (dB)</text>
</svg>

<!-- objective panel -->
<div class="a" style="left:419.5px;top:571.3px;width:382px;height:123.3px;border:1px solid #cad0d6"></div>
<div class="a" style="left:421px;top:568px;width:31px;height:7px;background:#f0f0f0"></div>
<div class="t" style="left:423px;top:569px;font-size:6.6px;color:#222">Objective</div>
<div class="t" style="left:427px;top:589px;font-size:6.3px;color:#222">Objective Function:</div>
<div class="t" style="left:504px;top:589px;font-size:6.3px;color:#222">9.1868 dBi</div>
<div class="t" style="left:427px;top:611px;font-size:6.3px;color:#222">Current Iteration:</div>
<div class="t" style="left:504px;top:611px;font-size:6.3px;color:#222">50</div>
<!-- design vector panel -->
<div class="a" style="left:807px;top:571.3px;width:382.5px;height:123.3px;border:1px solid #cad0d6"></div>
<div class="a" style="left:809px;top:568px;width:45px;height:7px;background:#f0f0f0"></div>
<div class="t" style="left:811px;top:569px;font-size:6.6px;color:#222">Design Vector</div>
<div class="t" style="left:814px;top:589px;font-size:6.3px;color:#222">RowSpacing:</div>
<div class="t" style="left:892px;top:589px;font-size:6.3px;color:#222">2.3454</div>
<div class="t" style="left:814px;top:611px;font-size:6.3px;color:#222">ColumnSpacing:</div>
<div class="t" style="left:892px;top:611px;font-size:6.3px;color:#222">3.4571</div>

<!-- status bar -->
<div class="a" style="left:0;top:704px;width:1198px;height:15px;background:#f2f2f2"></div>
<div class="a" style="left:0;top:703px;width:410px;height:1px;background:#dcdcdc"></div>
<div class="t" style="left:2px;top:709px;font-size:7.3px;color:#000">Optimization Complete</div>
<div class="a" style="left:0;top:719px;width:1198px;height:2px;background:#b4b4b4"></div>
</body></html>
